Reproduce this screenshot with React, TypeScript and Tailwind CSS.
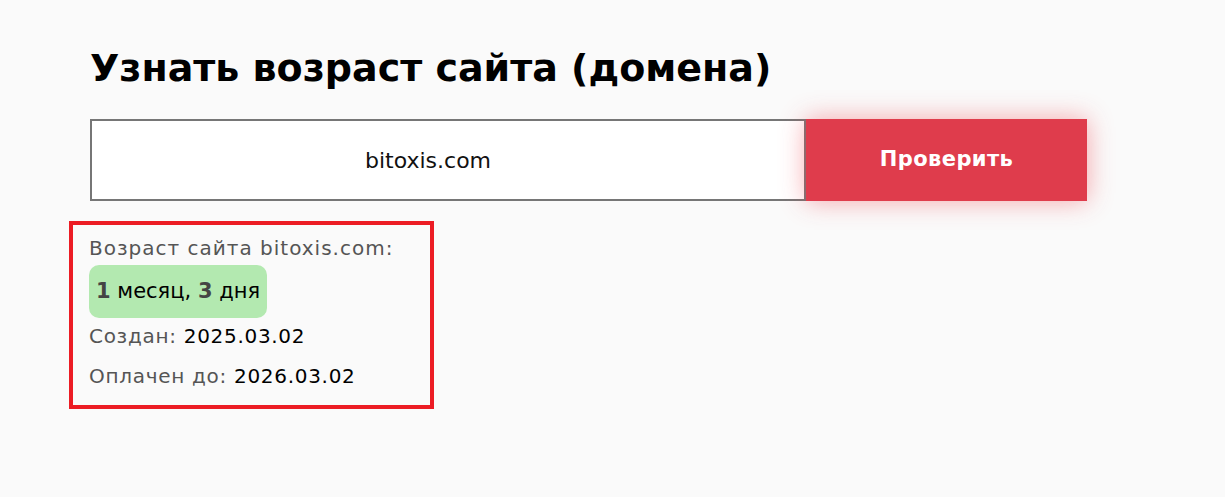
import { useState } from "react";

const sans = { fontFamily: '"DejaVu Sans", Verdana, sans-serif' };

export default function App() {
  const [domain, setDomain] = useState("bitoxis.com");

  return (
    <div className="min-h-[497px] w-full bg-[#fafafa] text-black" style={sans}>
      <div className="px-[90px] pt-[36px]">
        <h1 className="text-[38px] font-bold leading-[64px] text-black">
          Узнать возраст сайта (домена)
        </h1>

        <form
          className="mt-[19px] flex h-[82px] w-[997px]"
          onSubmit={(e) => e.preventDefault()}
        >
          <input
            value={domain}
            onChange={(e) => setDomain(e.target.value)}
            className="h-full w-[716px] border-2 border-[#767676] bg-white pr-[40px] text-center text-[22px] text-[#111] outline-none"
          />
          <button
            type="submit"
            className="h-full w-[281px] bg-[#df3c4c] text-[21px] font-bold tracking-[0.4px] text-white shadow-[0_0_24px_rgba(240,60,70,0.45)]"
          >
            Проверить
          </button>
        </form>
      </div>

      <div className="ml-[69px] mt-[20px] w-[365px] border-[4px] border-[#ec1c24] px-[16px] pb-[9px] pt-[8px]">
        <div className="text-[20px] leading-[30px] tracking-[1px] text-[#555]">Возраст сайта {domain}:</div>
        <div className="mt-[2px] inline-flex h-[53px] items-center rounded-[10px] bg-[#b3e9b0] px-[7px] text-[21px] text-black">
          <b className="text-[#444]">1</b>&nbsp;месяц,&nbsp;<b className="text-[#444]">3</b>&nbsp;дня
        </div>
        <div className="-mt-[2px] text-[20px] leading-[40px] tracking-[0.7px] text-[#555]">
          Создан: <span className="text-black">2025.03.02</span>
        </div>
        <div className="text-[20px] leading-[40px] tracking-[0.7px] text-[#555]">
          Оплачен до: <span className="text-black">2026.03.02</span>
        </div>
      </div>
    </div>
  );
}
